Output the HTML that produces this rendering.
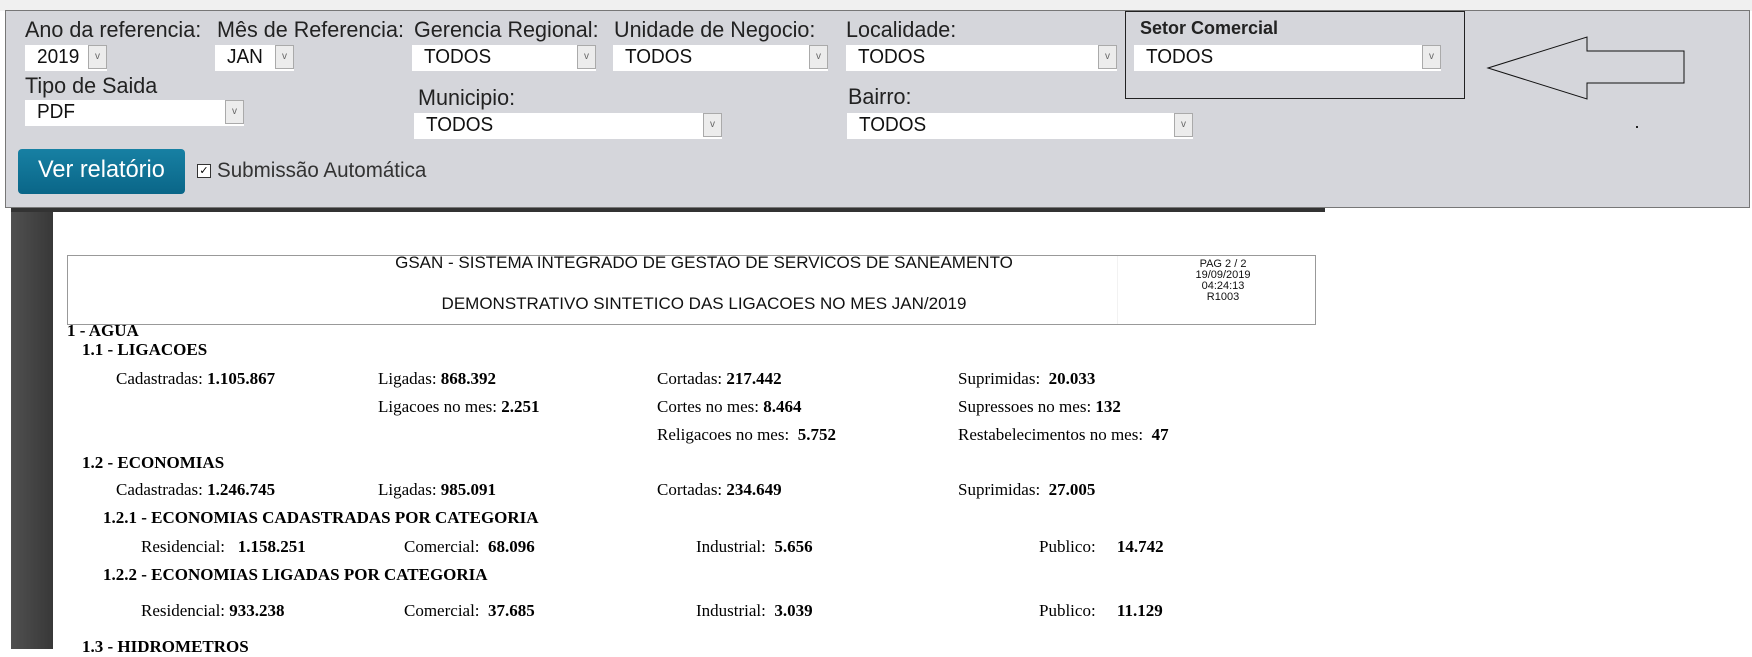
<!DOCTYPE html>
<html><head><meta charset="utf-8"><style>
body{margin:0;width:1752px;height:649px;background:#fff;position:relative;overflow:hidden;font-family:"Liberation Sans",sans-serif}
.a{position:absolute;white-space:nowrap}
#top{position:absolute;left:0;top:0;width:1752px;height:11px;background:#f0f0f0}
#panel{position:absolute;left:5px;top:10px;width:1743px;height:196px;background:#d5d6db;border:1px solid #777}
.lb{position:absolute;white-space:nowrap;font-size:22px;color:#222;transform:scaleX(.98);transform-origin:left}
.sel{position:absolute;background:#fff;height:26px}
.sel span{position:absolute;left:12px;top:1px;font-size:20px;color:#111;transform:scaleX(.95);transform-origin:left}
.sel i{position:absolute;right:0;top:0;width:19px;height:24px;background:#ececec;border:1px solid #aaa;box-sizing:border-box;font-style:normal;font-size:10px;color:#666;text-align:center;line-height:22px}
.s{font-family:"Liberation Serif",serif;font-size:17px;color:#000}
.s b{font-weight:bold}
.h{font-weight:bold}
</style></head><body>
<div id="top"></div>
<div id="panel"></div>
<div class="lb" style="left:25px;top:17px">Ano da referencia:</div>
<div class="lb" style="left:217px;top:17px">Mês de Referencia:</div>
<div class="lb" style="left:414px;top:17px">Gerencia Regional:</div>
<div class="lb" style="left:614px;top:17px">Unidade de Negocio:</div>
<div class="lb" style="left:846px;top:17px">Localidade:</div>
<div style="position:absolute;left:1125px;top:11px;width:340px;height:88px;border:1px solid #222;box-sizing:border-box"></div>
<div class="lb" style="left:1140px;top:18px;font-size:18px;font-weight:bold;transform:none">Setor Comercial</div>
<div class="sel" style="left:25px;top:45px;width:82px"><span>2019</span><i>v</i></div>
<div class="sel" style="left:215px;top:45px;width:79px"><span>JAN</span><i>v</i></div>
<div class="sel" style="left:412px;top:45px;width:184px"><span>TODOS</span><i>v</i></div>
<div class="sel" style="left:613px;top:45px;width:215px"><span>TODOS</span><i>v</i></div>
<div class="sel" style="left:846px;top:45px;width:271px"><span>TODOS</span><i>v</i></div>
<div class="sel" style="left:1134px;top:45px;width:307px"><span>TODOS</span><i>v</i></div>
<div class="lb" style="left:25px;top:73px">Tipo de Saida</div>
<div class="sel" style="left:25px;top:100px;width:219px"><span>PDF</span><i>v</i></div>
<div class="lb" style="left:418px;top:85px">Municipio:</div>
<div class="sel" style="left:414px;top:113px;width:308px"><span>TODOS</span><i>v</i></div>
<div class="lb" style="left:848px;top:84px">Bairro:</div>
<div class="sel" style="left:847px;top:113px;width:346px"><span>TODOS</span><i>v</i></div>
<div style="position:absolute;left:18px;top:149px;width:167px;height:45px;border-radius:4px;background:linear-gradient(#1780a3,#0a6688)"></div>
<div class="lb" style="left:38px;top:156px;color:#fff;font-size:24px">Ver relatório</div>
<div style="position:absolute;left:197px;top:164px;width:14px;height:14px;border:1px solid #333;background:#fff;box-sizing:border-box;font-size:11px;line-height:12px;text-align:center">✓</div>
<div class="lb" style="left:217px;top:159px;color:#333;font-size:21px">Submissão Automática</div>
<svg class="a" style="left:0;top:0" width="1752" height="210"><polygon points="1488,68 1587,37 1587,51 1684,51 1684,83 1587,83 1587,99" fill="none" stroke="#111" stroke-width="1"/><rect x="1636" y="126" width="2" height="2" fill="#222"/></svg>
<div style="position:absolute;left:11px;top:208px;width:1314px;height:4px;background:#333"></div>
<div style="position:absolute;left:11px;top:212px;width:42px;height:437px;background:linear-gradient(90deg,#505050,#383838)"></div>
<div style="position:absolute;left:67px;top:255px;width:1249px;height:70px;border:1px solid #999;box-sizing:border-box"></div>
<div style="position:absolute;left:1117px;top:256px;width:1px;height:68px;background:#f2f2f2"></div>
<div class="a" style="left:79px;width:1250px;top:253px;text-align:center;font-size:17px;color:#111">GSAN - SISTEMA INTEGRADO DE GESTAO DE SERVICOS DE SANEAMENTO</div>
<div class="a" style="left:79px;width:1250px;top:294px;text-align:center;font-size:17px;color:#111">DEMONSTRATIVO SINTETICO DAS LIGACOES NO MES JAN/2019</div>
<div class="a" style="left:1166px;width:114px;top:259px;text-align:center;font-size:11px;line-height:11px;color:#111">PAG 2 / 2<br>19/09/2019<br>04:24:13<br>R1003</div>
<div class="a s h" style="left:67px;top:321px">1 - AGUA</div>
<div class="a s h" style="left:82px;top:340px">1.1 - LIGACOES</div>
<div class="a s" style="left:116px;top:369px">Cadastradas: <b>1.105.867</b></div>
<div class="a s" style="left:378px;top:369px">Ligadas: <b>868.392</b></div>
<div class="a s" style="left:657px;top:369px">Cortadas: <b>217.442</b></div>
<div class="a s" style="left:958px;top:369px">Suprimidas:&nbsp; <b>20.033</b></div>
<div class="a s" style="left:378px;top:397px">Ligacoes no mes: <b>2.251</b></div>
<div class="a s" style="left:657px;top:397px">Cortes no mes: <b>8.464</b></div>
<div class="a s" style="left:958px;top:397px">Supressoes no mes: <b>132</b></div>
<div class="a s" style="left:657px;top:425px">Religacoes no mes:&nbsp; <b>5.752</b></div>
<div class="a s" style="left:958px;top:425px">Restabelecimentos no mes:&nbsp; <b>47</b></div>
<div class="a s h" style="left:82px;top:453px">1.2 - ECONOMIAS</div>
<div class="a s" style="left:116px;top:480px">Cadastradas: <b>1.246.745</b></div>
<div class="a s" style="left:378px;top:480px">Ligadas: <b>985.091</b></div>
<div class="a s" style="left:657px;top:480px">Cortadas: <b>234.649</b></div>
<div class="a s" style="left:958px;top:480px">Suprimidas:&nbsp; <b>27.005</b></div>
<div class="a s h" style="left:103px;top:508px">1.2.1 - ECONOMIAS CADASTRADAS POR CATEGORIA</div>
<div class="a s" style="left:141px;top:537px">Residencial:&nbsp;&nbsp; <b>1.158.251</b></div>
<div class="a s" style="left:404px;top:537px">Comercial:&nbsp; <b>68.096</b></div>
<div class="a s" style="left:696px;top:537px">Industrial:&nbsp; <b>5.656</b></div>
<div class="a s" style="left:1039px;top:537px">Publico:&nbsp;&nbsp;&nbsp;&nbsp; <b>14.742</b></div>
<div class="a s h" style="left:103px;top:565px">1.2.2 - ECONOMIAS LIGADAS POR CATEGORIA</div>
<div class="a s" style="left:141px;top:601px">Residencial: <b>933.238</b></div>
<div class="a s" style="left:404px;top:601px">Comercial:&nbsp; <b>37.685</b></div>
<div class="a s" style="left:696px;top:601px">Industrial:&nbsp; <b>3.039</b></div>
<div class="a s" style="left:1039px;top:601px">Publico:&nbsp;&nbsp;&nbsp;&nbsp; <b>11.129</b></div>
<div class="a s h" style="left:82px;top:637px">1.3 - HIDROMETROS</div>
</body></html>
